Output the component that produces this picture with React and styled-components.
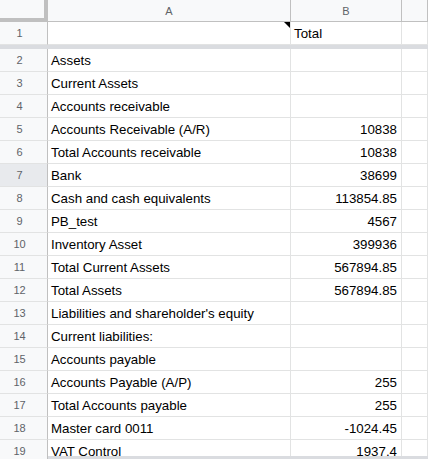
import React from 'react'
import styled, { createGlobalStyle } from 'styled-components'

const Global = createGlobalStyle`
  *, *::before, *::after { box-sizing: border-box; }
  body { margin: 0; background: #fff; font-family: "Liberation Sans", Arial, sans-serif; overflow: hidden; }
`
const Grid = styled.div`
  display: grid;
  grid-template-columns: 48px 243px 111px 26px;
  align-content: start;
  width: 428px;
  height: 459px;
  overflow: hidden;
  position: relative;
`
const Corner = styled.div`
  height: 22px;
  background: #f8f9fa;
  border-right: 4px solid #c0c0c0;
  border-bottom: 4px solid #c0c0c0;
`
const ColHead = styled.div`
  height: 22px;
  background: #f8f9fa;
  border-right: 1px solid #c0c0c0;
  border-bottom: 1px solid #c0c0c0;
  color: #5f6368;
  font-size: 11px;
  display: flex;
  align-items: center;
  justify-content: center;
`
const RowHead = styled.div`
  height: 23px;
  background: ${p => (p.$active ? '#e8eaed' : '#f8f9fa')};
  border-right: 1px solid #c0c0c0;
  border-bottom: 1px solid #e2e3e3;
  color: #5f6368;
  font-size: 11px;
  display: flex;
  align-items: center;
  justify-content: center;
  padding-right: 8px;
`
const Cell = styled.div`
  height: 23px;
  border-right: 1px solid #e2e3e3;
  border-bottom: 1px solid #e2e3e3;
  font-size: 13.3px;
  color: #000;
  display: flex;
  align-items: flex-end;
  justify-content: ${p => (p.$num ? 'flex-end' : 'flex-start')};
  padding: 0 4px 3px 3px;
  white-space: nowrap;
  position: relative;
`
const Note = styled.span`
  position: absolute;
  top: 0;
  right: 0;
  width: 0;
  height: 0;
  border-top: 6px solid #000;
  border-left: 6px solid transparent;
`
const Freeze = styled.div`
  grid-column: 1 / -1;
  height: 4px;
  background: #dadce0;
`
const Scroll = styled.div`
  position: absolute;
  left: 48px;
  right: 0;
  bottom: 0;
  height: 3px;
  background: #dadce0;
`

const rows = [
  ['Assets', ''], ['Current Assets', ''], ['Accounts receivable', ''],
  ['Accounts Receivable (A/R)', '10838'], ['Total Accounts receivable', '10838'],
  ['Bank', '38699'], ['Cash and cash equivalents', '113854.85'], ['PB_test', '4567'],
  ['Inventory Asset', '399936'], ['Total Current Assets', '567894.85'],
  ['Total Assets', '567894.85'], ["Liabilities and shareholder's equity", ''],
  ['Current liabilities:', ''], ['Accounts payable', ''], ['Accounts Payable (A/P)', '255'],
  ['Total Accounts payable', '255'], ['Master card 0011', '-1024.45'], ['VAT Control', '1937.4'],
]

export default function App() {
  return (
    <Grid>
      <Global />
      <Corner />
      <ColHead>A</ColHead>
      <ColHead>B</ColHead>
      <ColHead />
      <RowHead>1</RowHead>
      <Cell><Note /></Cell>
      <Cell>Total</Cell>
      <Cell />
      <Freeze />
      {rows.map(([label, val], i) => (
        <React.Fragment key={i}>
          <RowHead $active={i + 2 === 7}>{i + 2}</RowHead>
          <Cell>{label}</Cell>
          <Cell $num>{val}</Cell>
          <Cell />
        </React.Fragment>
      ))}
      <Scroll />
    </Grid>
  )
}
